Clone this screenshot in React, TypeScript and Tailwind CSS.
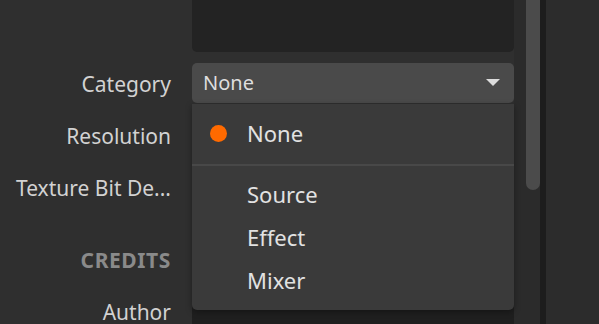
import { useState } from 'react'

const ITEMS = ['Source', 'Effect', 'Mixer']

function Label({ children, muted }: { children: React.ReactNode; muted?: boolean }) {
  return (
    <div
      className={`w-[171px] shrink-0 pt-[3px] text-right whitespace-nowrap ${
        muted ? 'text-[#8a8a8a] font-bold text-[21px] tracking-[0.6px]' : 'text-[#d2d2d2] text-[21px]'
      }`}
    >
      {children}
    </div>
  )
}

export default function App() {
  const [category] = useState('None')

  return (
    <div
      className="w-[599px] h-[324px] flex overflow-hidden bg-[#2f2f2f] select-none"
      style={{ fontFamily: '"Noto Sans", "Open Sans", sans-serif' }}
    >
      {/* properties panel */}
      <div className="w-[514px] shrink-0 flex flex-col">
        <div className="flex gap-[21px] shrink-0">
          <div className="w-[171px] shrink-0" />
          <div className="flex-1 h-[52px] bg-[#232323] rounded-b-[5px]" />
        </div>

        <div className="flex items-center gap-[21px] mt-[11px] h-[40px] shrink-0">
          <Label>Category</Label>
          <div className="relative flex-1 h-full">
            <div className="h-full bg-[#4a4a4a] rounded-[5px] flex items-center justify-between pl-[11px] pr-[14px]">
              <span className="text-[20px] text-[#dedede]">{category}</span>
              <svg width="14" height="8" viewBox="0 0 14 8">
                <path d="M0 0 H14 L7 7 Z" fill="#dcdcdc" />
              </svg>
            </div>

            {/* open menu */}
            <div className="absolute left-0 right-0 top-[41px] z-10 bg-[#3a3a3a] rounded-b-[5px] pt-[8px] pb-[8px] shadow-[0_2px_6px_rgba(0,0,0,0.35)]">
              <div className="h-[43px] flex items-center pl-[18px]">
                <span className="w-[17px] h-[17px] rounded-full bg-[#ff6a00]" />
                <span className="ml-[20px] text-[22px] text-[#e2e2e2]">None</span>
              </div>
              <div className="h-[2px] bg-[#484848] mt-[9px] mb-[7px]" />
              {ITEMS.map((item) => (
                <div key={item} className="h-[43px] flex items-center pl-[55px]">
                  <span className="text-[22px] text-[#e2e2e2]">{item}</span>
                </div>
              ))}
            </div>
          </div>
        </div>

        <div className="flex items-center gap-[21px] h-[52px] mt-[6px] shrink-0">
          <Label>Resolution</Label>
        </div>
        <div className="flex items-center gap-[21px] h-[52px] shrink-0">
          <Label>Texture Bit De...</Label>
        </div>
        <div className="flex items-center gap-[21px] h-[40px] mt-[26px] shrink-0">
          <Label muted>CREDITS</Label>
        </div>
        <div className="flex items-center gap-[21px] h-[40px] mt-[12px] shrink-0">
          <Label>Author</Label>
          <div className="flex-1 h-[40px] bg-[#1f1f1f] rounded-[5px]" />
        </div>
      </div>

      {/* scrollbar */}
      <div className="w-[26px] shrink-0 bg-[#2b2b2b] flex justify-end">
        <div className="w-[14px] h-[190px] bg-[#4b4b4b] rounded-b-[7px]" />
      </div>
      <div className="w-[6px] shrink-0 bg-[#1d1d1d]" />
      <div className="flex-1 bg-[#2c2c2c]" />
    </div>
  )
}
